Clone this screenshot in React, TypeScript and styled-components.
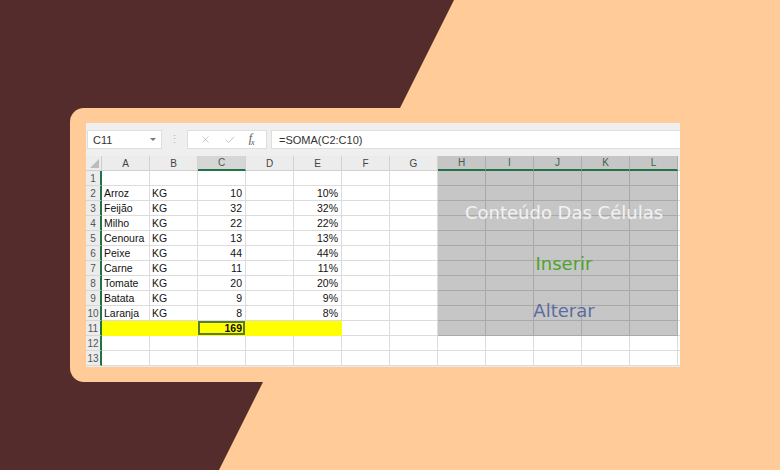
import styled, { createGlobalStyle } from "styled-components";
import { X, Check } from "lucide-react";

const GlobalStyle = createGlobalStyle`
  html, body { margin: 0; padding: 0; }
  body { font-family: "Liberation Sans", Arial, sans-serif; }
`;

const Page = styled.div`
  position: relative;
  width: 780px;
  height: 470px;
  overflow: hidden;
  box-sizing: border-box;
  padding: 108px 0 0 70px;
  background: #552c2c;

  &::before {
    content: "";
    position: absolute;
    inset: 0;
    background: #fecb99;
    clip-path: polygon(454px 0, 780px 0, 780px 470px, 219px 470px);
  }
`;

const Card = styled.div`
  position: relative;
  width: 720px;
  height: 274px;
  box-sizing: border-box;
  padding: 15px 0 0 16px;
  border-radius: 14px;
  background: #fecb99;
`;

const Sheet = styled.div`
  width: 594px;
  height: 244px;
  display: flex;
  flex-direction: column;
  overflow: hidden;
  background: #ececec;
`;

const FormulaBar = styled.div`
  display: flex;
  align-items: stretch;
  height: 33px;
  box-sizing: border-box;
  padding: 7px 0 7px 1px;
  background: #efefef;
`;

const Box = styled.div<{ $width?: number }>`
  display: flex;
  align-items: center;
  box-sizing: border-box;
  ${(p) => (p.$width ? `width: ${p.$width}px;` : "flex: 1;")}
  background: #fff;
  border: 1px solid #dedede;
  font-size: 11px;
  color: #333;
`;

const NameBox = styled(Box)`
  justify-content: space-between;
  padding: 0 5px;
`;

const Caret = styled.span`
  width: 0;
  height: 0;
  border-left: 3px solid transparent;
  border-right: 3px solid transparent;
  border-top: 3px solid #777;
`;

const Dots = styled.div`
  width: 25px;
  display: flex;
  align-items: center;
  justify-content: center;
  color: #b5b5b5;
  font-size: 11px;
`;

const Buttons = styled(Box)`
  justify-content: space-around;
  padding: 0 6px;
  margin-right: 4px;
`;

const Fx = styled.span`
  font-family: "Liberation Serif", "Times New Roman", serif;
  font-style: italic;
  font-size: 12px;
  color: #555;
  letter-spacing: -1px;

  sub {
    font-size: 8px;
  }
`;

const FormulaText = styled(Box)`
  padding-left: 7px;
  border-right: none;
`;

/* grid and the text box laid over it share one grid cell */
const SheetBody = styled.div`
  display: grid;
  background: #fff;

  & > * {
    grid-area: 1 / 1;
  }
`;

const Grid = styled.div`
  display: grid;
  grid-template-columns: 16px repeat(12, 48px) 1fr;
  grid-auto-rows: 15px;
`;

const Corner = styled.div`
  display: flex;
  align-items: flex-end;
  justify-content: flex-end;
  padding: 0 2px 2px 0;
  box-sizing: border-box;
  background: #ececec;
  border-right: 1px solid #cfcfcf;
  border-bottom: 1px solid #cfcfcf;
`;

const ColHead = styled.div<{ $tone: "plain" | "picked" | "range" }>`
  display: flex;
  align-items: center;
  justify-content: center;
  box-sizing: border-box;
  font-size: 10px;
  color: ${(p) => (p.$tone === "plain" ? "#444" : "#3f5e4b")};
  background: ${(p) =>
    p.$tone === "picked" ? "#d6d6d6" : p.$tone === "range" ? "#c6c6c6" : "#ececec"};
  border-right: 1px solid ${(p) => (p.$tone === "range" ? "#adadad" : "#d2d2d2")};
  border-bottom: ${(p) => (p.$tone === "plain" ? "1px solid #cfcfcf" : "2px solid #217346")};
`;

const RowHead = styled.div`
  display: flex;
  align-items: center;
  justify-content: center;
  box-sizing: border-box;
  font-size: 10px;
  color: #555;
  background: #ececec;
  border-bottom: 1px solid #d6d6d6;
  border-right: 2px solid #217346;
`;

type Fill = "none" | "yellow" | "gray";

const lineColor = (f: Fill) => (f === "gray" ? "#a9a9a9" : f === "yellow" ? "#ffff00" : "#dcdcdc");

const Cell = styled.div<{ $fill: Fill; $right?: boolean; $bold?: boolean; $active?: boolean }>`
  box-sizing: border-box;
  padding: 0 ${(p) => (p.$right ? "3px" : "2px")};
  font-size: 10.5px;
  line-height: 14px;
  color: #111;
  white-space: nowrap;
  overflow: hidden;
  text-align: ${(p) => (p.$right ? "right" : "left")};
  font-weight: ${(p) => (p.$bold ? 700 : 400)};
  background: ${(p) => (p.$fill === "yellow" ? "#ffff00" : p.$fill === "gray" ? "#c6c6c6" : "#fff")};
  border-right: 1px solid ${(p) => lineColor(p.$fill)};
  border-bottom: 1px solid ${(p) => lineColor(p.$fill)};
  ${(p) => (p.$active ? "box-shadow: inset 0 0 0 2px #5a7a3a;" : "")}
`;

const Callout = styled.div`
  z-index: 1;
  width: 240px;
  margin-left: 352px;
  display: flex;
  flex-direction: column;
  align-items: center;
  align-self: start;
  padding-left: 12px;
  box-sizing: border-box;
  pointer-events: none;
  font-family: "DejaVu Sans", Verdana, sans-serif;
  font-size: 18px;
  line-height: 18px;
  white-space: nowrap;
`;

const CalloutText = styled.span<{ $color: string; $top: number }>`
  color: ${(p) => p.$color};
  margin-top: ${(p) => p.$top}px;
`;

const columns = ["A", "B", "C", "D", "E", "F", "G", "H", "I", "J", "K", "L"];

const data: [string, string, string, string][] = [
  ["", "", "", ""],
  ["Arroz", "KG", "10", "10%"],
  ["Feijão", "KG", "32", "32%"],
  ["Milho", "KG", "22", "22%"],
  ["Cenoura", "KG", "13", "13%"],
  ["Peixe", "KG", "44", "44%"],
  ["Carne", "KG", "11", "11%"],
  ["Tomate", "KG", "20", "20%"],
  ["Batata", "KG", "9", "9%"],
  ["Laranja", "KG", "8", "8%"],
  ["", "", "169", ""],
  ["", "", "", ""],
  ["", "", "", ""],
];

function fillFor(row: number, col: number): Fill {
  if (row <= 11 && col >= 7) return "gray";
  if (row === 11 && col <= 4) return "yellow";
  return "none";
}

export default function App() {
  return (
    <>
      <GlobalStyle />
      <Page>
        <Card>
          <Sheet>
            <FormulaBar>
              <NameBox $width={75}>
                <span>C11</span>
                <Caret />
              </NameBox>
              <Dots>⋮</Dots>
              <Buttons $width={80}>
                <X size={11} color="#b4b4b4" strokeWidth={1.5} />
                <Check size={12} color="#b4b4b4" strokeWidth={1.5} />
                <Fx>
                  f<sub>x</sub>
                </Fx>
              </Buttons>
              <FormulaText>=SOMA(C2:C10)</FormulaText>
            </FormulaBar>
            <SheetBody>
              <Grid>
                <Corner>
                  <svg width="9" height="9" viewBox="0 0 9 9">
                    <polygon points="9,0 9,9 0,9" fill="#bcbcbc" />
                  </svg>
                </Corner>
                {columns.map((c, i) => (
                  <ColHead key={c} $tone={i === 2 ? "picked" : i >= 7 ? "range" : "plain"}>
                    {c}
                  </ColHead>
                ))}
                <ColHead $tone="plain" />
                {data.map(([a, b, c, e], r) => {
                  const row = r + 1;
                  const values = [a, b, c, "", e, "", "", "", "", "", "", ""];
                  return [
                    <RowHead key={`h${row}`}>{row}</RowHead>,
                    ...values.map((v, col) => (
                      <Cell
                        key={`${row}-${col}`}
                        $fill={fillFor(row, col)}
                        $right={col === 2 || col === 4}
                        $bold={row === 11 && col === 2}
                        $active={row === 11 && col === 2}
                      >
                        {v}
                      </Cell>
                    )),
                    <Cell key={`${row}-x`} $fill="none" />,
                  ];
                })}
              </Grid>
              <Callout>
                <CalloutText $color="#f2f2f2" $top={48}>
                  Conteúdo Das Células
                </CalloutText>
                <CalloutText $color="#4ea22e" $top={33}>
                  Inserir
                </CalloutText>
                <CalloutText $color="#5b6ca0" $top={29}>
                  Alterar
                </CalloutText>
              </Callout>
            </SheetBody>
          </Sheet>
        </Card>
      </Page>
    </>
  );
}
